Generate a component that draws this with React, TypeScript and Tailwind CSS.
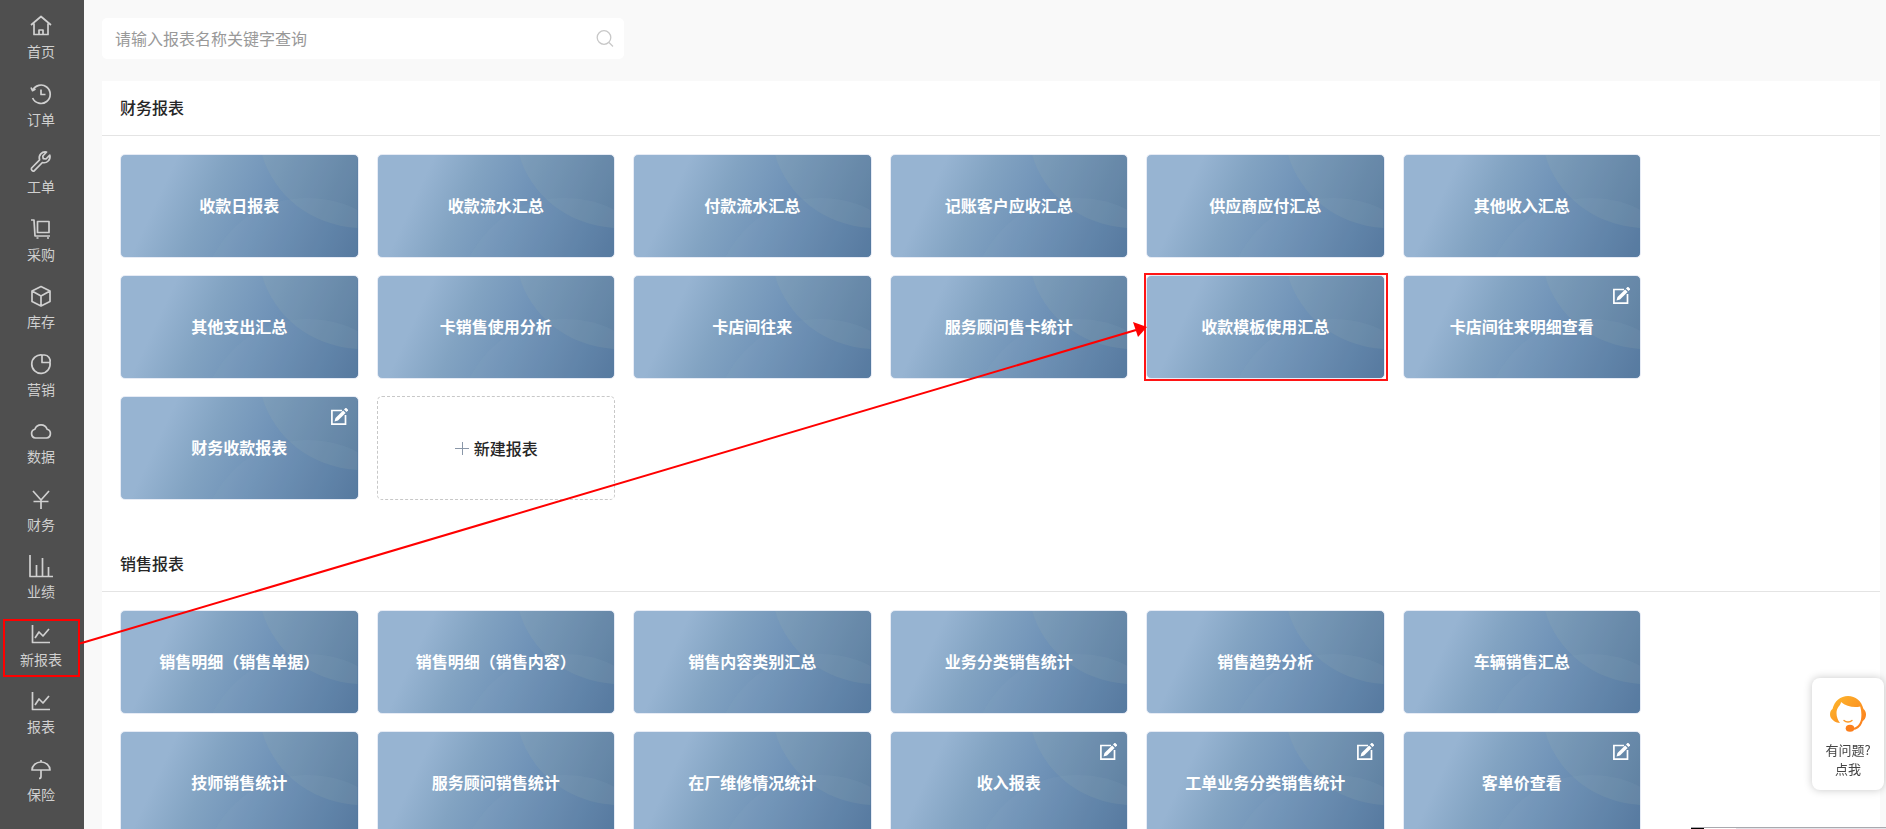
import React from "react";

type Report = { name: string; editable?: boolean; marked?: boolean };

const navItems: { label: string; icon: React.ReactNode; marked?: boolean }[] = [
  { label: "首页", icon: <path d="M1 10 11 1.500l10 8.500M4 8.500V19.500h14V8.500M9 19.500v-4.500h4v4.500" /> },
  { label: "订单", icon: <path d="M2.600 7.500a9.200 9.200 0 1 1 0 7.500M1 4.500l1.500 3.200L5.500 6M11 6.500v5h4.500" /> },
  { label: "工单", icon: <path d="M19.800 5.200 16 9l-2.800-.4L12.800 6l3.800-4A6 6 0 0 0 9.600 9.800l-8 8.200a2 2 0 0 0 2.800 2.700l8-8.200A6 6 0 0 0 19.800 5.200Z" /> },
  { label: "采购", icon: <path d="M1 2h3l1 16h15M7.500 3.500h11.500v11h-11.500ZM6.500 20h2M17 20h2" /> },
  { label: "库存", icon: <path d="m11 1.500 9 4.500v10.500L11 21l-9-4.500V6ZM2 6l9 5 9-5M11 11v10" /> },
  { label: "营销", icon: <path d="M20 9.500A9.200 9.200 0 1 1 12 2h2.500a6 6 0 0 1 5.500 7.500h-8V2" /> },
  { label: "数据", icon: <path d="M5.500 18a4.500 4.500 0 0 1-.6-8.800 6.500 6.500 0 0 1 12.200 0 4.500 4.500 0 0 1-.6 8.800Z" /> },
  { label: "财务", icon: <path d="m3 3 8 9 8-9M3.500 13.500h15M11 12v9" /> },
  { label: "业绩", icon: <path d="M0 0v21.500h23M6.500 21V10M12.500 21V3M18.500 21v-9" /> },
  { label: "新报表", icon: <path d="M2.500 2v17.500h17.500M5 15l4-6 4 4 6-7" />, marked: true },
  { label: "报表", icon: <path d="M2.500 2v17.500h17.500M5 15l4-6 4 4 6-7" /> },
  { label: "保险", icon: <path d="M2 12a9 8 0 0 1 18 0ZM11 2v2M11 12v6.500c0 1.500-.8 2-2 2" /> },
];

const sections: { title: string; reports: Report[]; creatable?: boolean }[] = [
  {
    title: "财务报表",
    creatable: true,
    reports: [
      { name: "收款日报表" },
      { name: "收款流水汇总" },
      { name: "付款流水汇总" },
      { name: "记账客户应收汇总" },
      { name: "供应商应付汇总" },
      { name: "其他收入汇总" },
      { name: "其他支出汇总" },
      { name: "卡销售使用分析" },
      { name: "卡店间往来" },
      { name: "服务顾问售卡统计" },
      { name: "收款模板使用汇总", marked: true },
      { name: "卡店间往来明细查看", editable: true },
      { name: "财务收款报表", editable: true },
    ],
  },
  {
    title: "销售报表",
    reports: [
      { name: "销售明细（销售单据）" },
      { name: "销售明细（销售内容）" },
      { name: "销售内容类别汇总" },
      { name: "业务分类销售统计" },
      { name: "销售趋势分析" },
      { name: "车辆销售汇总" },
      { name: "技师销售统计" },
      { name: "服务顾问销售统计" },
      { name: "在厂维修情况统计" },
      { name: "收入报表", editable: true },
      { name: "工单业务分类销售统计", editable: true },
      { name: "客单价查看", editable: true },
    ],
  },
];

function Sidebar() {
  return (
    <nav className="w-[84px] shrink-0 bg-[#4f4f4f] pt-[5px]">
      <ul className="grid h-[810px] grid-rows-12">
        {navItems.map((item) => (
          <li key={item.label} className="relative">
            <a href="#" className="flex flex-col items-center gap-1 pr-0.5 pt-2.5 text-sm leading-5 text-[#d0d0d0]">
              <svg className="h-[22px] w-[22px] overflow-visible" viewBox="0 0 22 22" fill="none" stroke="currentColor" strokeWidth="1.700" strokeLinejoin="round" aria-hidden="true">
                {item.icon}
              </svg>
              {item.label}
            </a>
            {item.marked && <span className="absolute left-[3px] right-1 top-1.5 h-[58px] border-2 border-[#f00]" />}
          </li>
        ))}
      </ul>
    </nav>
  );
}

function CardArt() {
  return (
    <svg className="absolute inset-0 h-full w-full" viewBox="0 0 238 102" preserveAspectRatio="none" aria-hidden="true">
      <path d="M142 0C154 40 190 70 238 73V0Z" fill="#a3b5b0" fillOpacity=".15" />
      <path d="M92 102C112 65 145 43 187 43C208 43 226 48 238 55V102Z" fill="#8fb0c8" fillOpacity=".1" />
    </svg>
  );
}

function ReportCard({ name, editable, marked }: Report) {
  return (
    <div className="relative h-[104px]">
      <button className="relative flex h-full w-full items-center justify-center overflow-hidden rounded-[5px] border border-[#e6ebf5] bg-[linear-gradient(115deg,#97b4d2_0%,#97b4d2_20%,#82a3c2_38%,#6f92b7_60%,#50749c_100%)] pb-0.5 text-base font-bold text-white">
        <CardArt />
        <span className="relative">{name}</span>
      </button>
      {editable && (
        <button aria-label="编辑" className="absolute right-[11px] top-3 text-white">
          <svg className="h-[18px] w-[18px]" viewBox="0 0 18 18" fill="none" stroke="currentColor" strokeWidth="1.700" aria-hidden="true">
            <path d="M12 2.500H1.900v13.600h13.600V7" />
            <path d="m4.500 13.500 1-3.500 7.600-7.600 2.500 2.500-7.600 7.600Z" fill="currentColor" stroke="none" />
            <path d="m14 1.500 1.500-1.500h.8l1.700 1.700v.8l-1.500 1.500Z" fill="currentColor" stroke="none" />
          </svg>
        </button>
      )}
      {marked && <span className="pointer-events-none absolute -inset-y-0.5 -left-0.5 -right-[3px] border-2 border-[#ff1414]" />}
    </div>
  );
}

function Section({ title, reports, creatable }: (typeof sections)[number]) {
  return (
    <section className="pb-[37px]">
      <h2 className="flex h-[55px] items-center border-b border-[#e4e4e4] px-[18px] pb-0.5 text-base font-medium text-[#262626]">{title}</h2>
      <div className="mx-[18px] mt-[18px] grid max-w-[1521px] grid-cols-6 gap-x-[18px] gap-y-[17px]">
        {reports.map((r) => (
          <ReportCard key={r.name} {...r} />
        ))}
        {creatable && (
          <button className="flex h-[104px] items-center justify-center gap-1 rounded-[5px] border border-dashed border-[#c8c8c8] bg-white text-base font-medium text-[#262626]">
            <svg className="h-4 w-4" viewBox="0 0 16 16" stroke="#8a97a8" strokeWidth="1" aria-hidden="true">
              <path d="M1 8.500h14M8.500 2v13" />
            </svg>
            新建报表
          </button>
        )}
      </div>
    </section>
  );
}

function HelpButton() {
  return (
    <button className="fixed bottom-[39px] right-0.5 flex h-[112px] w-[72px] flex-col items-center justify-start rounded-lg bg-white pt-[18px] text-[13px] leading-[19px] text-[#444] shadow-[0_0_8px_rgba(0,0,0,0.22)]">
      <svg className="mb-2 h-9 w-9 shrink-0" viewBox="0 0 36 36" fill="none" aria-hidden="true">
        <defs>
          <linearGradient id="headset" x1="0" y1="0" x2="1" y2="1">
            <stop offset="0" stopColor="#fdb92c" />
            <stop offset="1" stopColor="#fb7a1c" />
          </linearGradient>
        </defs>
        <path d="M2.500 13C4.500 5 10.500 0 18 0s13.500 5 15.500 13c2.800 2 3.300 6.500 1.300 10l-2.300 2.500c-1 4-4 7.500-8.500 8.300l-.5-1.800c4-1 6.500-4.500 7.500-8.500.7-4.500.5-9-.8-13C24 12 16 10.500 11 6c0 3.500-4.500 5-4.500 11 0 4 1.500 7.500 3.500 10-4-.3-8-2.500-9.500-6-1-3-.5-6 2-8Z" fill="url(#headset)" />
        <path d="M14 24.500c2 2 6 2 8 0" stroke="#fb9a2a" strokeWidth="1.400" strokeLinecap="round" />
        <ellipse cx="20" cy="32.300" rx="4.300" ry="3.500" fill="#fb7f1c" />
      </svg>
      <span>有问题?</span>
      <span>点我</span>
    </button>
  );
}

function GuideArrow() {
  return (
    <svg className="pointer-events-none absolute left-0 top-0 h-[829px] w-[1886px]" viewBox="0 0 1886 829" aria-hidden="true">
      <path d="M80 643.500 1136 330" stroke="#f00" strokeWidth="2" />
      <path d="m1147 327-14-5 5 15Z" fill="#f00" />
    </svg>
  );
}

export default function App() {
  return (
    <div className="relative flex h-screen overflow-hidden bg-[#f9f9f9] font-['Noto_Sans_CJK_SC',sans-serif]">
      <Sidebar />
      <main className="min-w-0 flex-1 pl-[18px] pr-1.5 pt-[18px]">
        <label className="flex h-[41px] w-[522px] items-center rounded-[5px] bg-white pl-[13px] pr-2.5">
          <input aria-label="报表名称" placeholder="请输入报表名称关键字查询" className="min-w-0 flex-1 bg-transparent pb-0.5 text-base outline-none placeholder:text-[#999]" />
          <svg className="h-[18px] w-[18px]" viewBox="0 0 18 18" fill="none" stroke="#c8c8c8" strokeWidth="1.300" aria-hidden="true">
            <circle cx="8" cy="7.500" r="6.800" />
            <path d="m13 12.500 4 4" />
          </svg>
        </label>
        <div className="mt-[22px] bg-white">
          {sections.map((s) => (
            <Section key={s.title} {...s} />
          ))}
        </div>
      </main>
      <HelpButton />
      <div className="fixed bottom-0 right-0 flex h-0.5 w-[195px] border-t border-[#a9a9ae] bg-[#e4e4ea]">
        <span className="w-[13px] bg-black" />
        <span className="w-8 bg-white" />
      </div>
      <GuideArrow />
    </div>
  );
}
